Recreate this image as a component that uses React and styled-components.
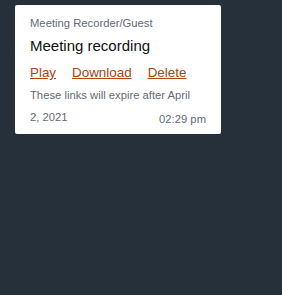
import React from "react";
import styled, { createGlobalStyle } from "styled-components";

const GlobalStyle = createGlobalStyle`
  html, body { margin: 0; padding: 0; }
  body {
    background: #25303a;
    font-family: "Liberation Sans", Arial, sans-serif;
    min-height: 295px;
  }
`;

const Page = styled.div`
  padding: 5px 0 0 15px;
`;

const Card = styled.div`
  width: 176px;
  padding: 12px 15px 6px 15px;
  background: #ffffff;
  border-radius: 2px;
`;

const Subtitle = styled.div`
  font-size: 11.25px;
  color: #646b74;
`;

const Title = styled.div`
  margin-top: 8px;
  font-size: 15px;
  color: #111111;
`;

const Links = styled.div`
  display: flex;
  gap: 16px;
  margin-top: 11px;
  font-size: 13.4px;
  line-height: 15px;
`;

const LinkText = styled.a`
  color: #ac4510;
  text-decoration: underline;
  cursor: pointer;
`;

const Footer = styled.div`
  display: grid;
  margin-top: 4px;
  font-size: 11.25px;
  line-height: 22px;
  color: #646b74;
`;

const Expiry = styled.p`
  grid-area: 1 / 1;
  margin: 0;
  max-width: 170px;
`;

const Time = styled.span`
  grid-area: 1 / 1;
  justify-self: end;
  align-self: end;
  margin-bottom: -2px;
`;

export default function App() {
  return (
    <>
      <GlobalStyle />
      <Page>
        <Card>
          <Subtitle>Meeting Recorder/Guest</Subtitle>
          <Title>Meeting recording</Title>
          <Links>
            <LinkText>Play</LinkText>
            <LinkText>Download</LinkText>
            <LinkText>Delete</LinkText>
          </Links>
          <Footer>
            <Expiry>These links will expire after April 2, 2021</Expiry>
            <Time>02:29 pm</Time>
          </Footer>
        </Card>
      </Page>
    </>
  );
}
